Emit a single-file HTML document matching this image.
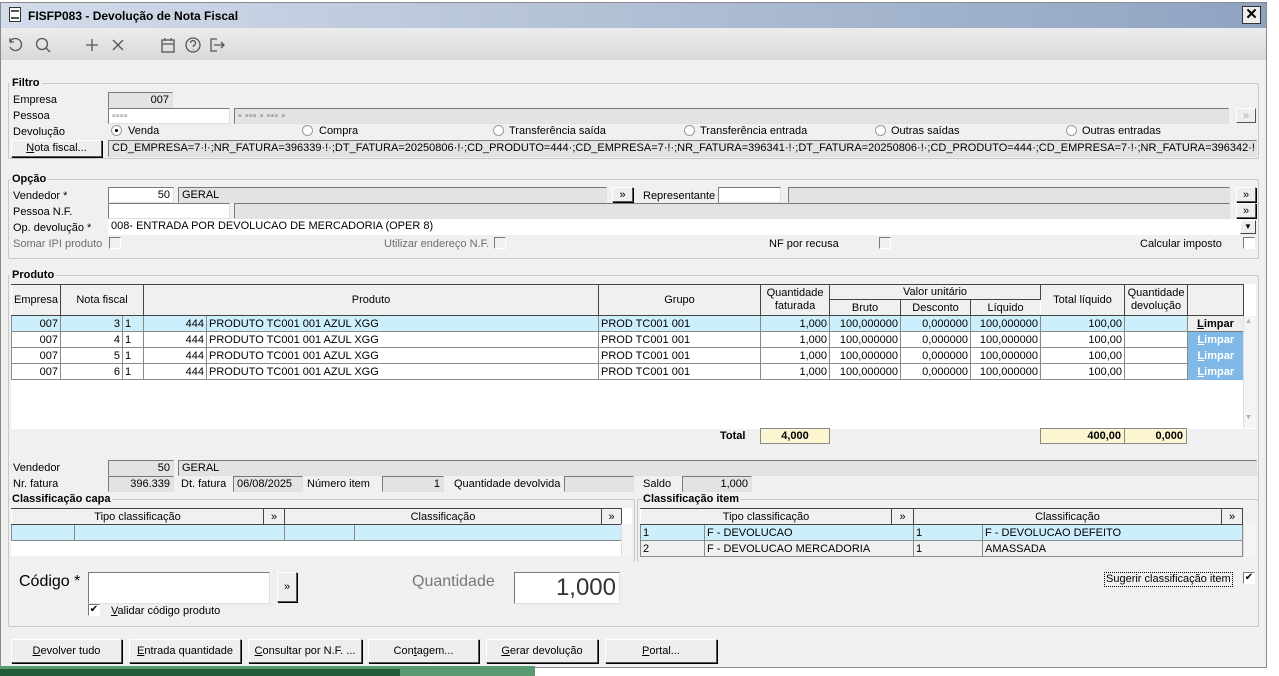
<!DOCTYPE html>
<html><head><meta charset="utf-8">
<style>
*{box-sizing:border-box;margin:0;padding:0}
body{width:1279px;height:676px;background:#fff;font-family:"Liberation Sans",Arial,sans-serif;font-size:11px;color:#000;position:relative;overflow:hidden}
.a{position:absolute;white-space:nowrap}
.win{position:absolute;left:0;top:2px;width:1267px;height:666px;background:#f0f0f0;border:1px solid #8a8a8a}
.title{position:absolute;left:1px;top:3px;width:1265px;height:25px;background:linear-gradient(90deg,#d3dcea,#8fa3c1);font-weight:bold;font-size:12px}
.tb{position:absolute;left:1px;top:28px;width:1265px;height:32px;background:linear-gradient(180deg,#ececec,#d9d9d9)}
.grp{position:absolute;border:1px solid #c8c8c8;border-radius:2px}
.gl{position:absolute;background:#f0f0f0;padding:0 2px;font-weight:bold;font-size:11px}
.in{position:absolute;height:16px;background:#fff;border:1px solid;border-color:#7a7a7a #e0e0e0 #e0e0e0 #7a7a7a;padding:1px 3px;line-height:13px;overflow:hidden;white-space:nowrap}
.ro{background:#e3e3e3}
.r{text-align:right}
.btn{position:absolute;background:#eee;border:1px solid;border-color:#fff #555 #555 #fff;box-shadow:1px 1px 0 #000;text-align:center;line-height:15px}
.rad{position:absolute;width:11px;height:11px;border-radius:50%;border:1px solid #9a9a9a;background:#fff}
.rad.on::after{content:"";position:absolute;left:3px;top:3px;width:3px;height:3px;border-radius:50%;background:#000}
.cb{position:absolute;width:12px;height:12px;border:1px solid;border-color:#7a7a7a #fff #fff #7a7a7a;background:#f0f0f0}
.cb.w{background:#fff}
.gray{color:#6d6d6d}
table{border-collapse:collapse;position:absolute}
td{border:1px solid #8a8a8a;height:16px;padding:0 2px;line-height:14px;white-space:nowrap;overflow:hidden}
.hd td{background:#f0f0f0;text-align:center;border-color:#444 #444 #444 #fff}
.sel td{background:#cdeefb}
.lim{color:#fff;background:#80b8e8!important;font-weight:bold;text-align:center;border:none!important}
.tot{background:#fcf6d0;border:1px solid #8a8a8a;font-weight:bold}
.u{text-decoration:underline}
.sb{position:absolute;background:#f4f4f4;border-left:1px solid #ddd}
</style></head><body>
<div class="win"></div>
<div class="title"><span class="a" style="left:8px;top:4px;width:12px;height:15px;background:#fff;border:1px solid #333"></span><span class="a" style="left:10px;top:7px;width:8px;height:9px;border-top:2px solid #555;border-bottom:2px solid #555"></span><span class="a" style="left:27px;top:6px">FISFP083 - Devolução de Nota Fiscal</span>
<span class="a" style="left:1241px;top:3px;width:19px;height:18px;background:#eee;border:1px solid #333;text-align:center;font-size:15px;line-height:16px">✕</span></div>
<div class="tb">
<svg class="a" style="left:6px;top:8px" width="230" height="18" fill="none" stroke="#555" stroke-width="1.3">
<path d="M3 6 A6 6 0 1 1 3 11 M3 2 V6 H7"/>
<circle cx="35" cy="8" r="5.5"/><path d="M39 12 L43 16"/>
<path d="M85 3 V15 M79 9 H91 M106 4 L116 14 M116 4 L106 14"/>
<rect x="155" y="4" width="12" height="12"/><path d="M155 8 H167 M158 2 V5 M164 2 V5"/>
<circle cx="186" cy="9" r="7"/><path d="M183.5 7 a2.5 2.5 0 1 1 3 2.5 v1.5 M186 13 v0.5"/>
<path d="M210 3 H204 V15 H210 M207 9 H217 M214 6 L217 9 L214 12"/>
</svg></div>

<!-- Filtro -->
<div class="grp" style="left:8px;top:83px;width:1251px;height:76px"></div>
<div class="gl" style="left:10px;top:77px">Filtro</div>
<div class="a" style="left:13px;top:94px">Empresa</div>
<div class="in ro r" style="left:108px;top:92px;width:65px">007</div>
<div class="a" style="left:13px;top:110px">Pessoa</div>
<div class="in" style="left:108px;top:108px;width:122px;color:#bbb">▪▪▪▪</div>
<div class="in ro" style="left:234px;top:108px;width:995px;color:#aaa">▪ ▪▪▪ ▪ ▪▪▪ ▪</div>
<div class="btn" style="left:1236px;top:108px;width:20px;height:15px;color:#aaa;box-shadow:none">»</div>
<div class="a" style="left:13px;top:126px">Devolução</div>
<div class="rad on" style="left:111px;top:125px"></div><div class="a" style="left:128px;top:125px">Venda</div>
<div class="rad" style="left:302px;top:125px"></div><div class="a" style="left:319px;top:125px">Compra</div>
<div class="rad" style="left:493px;top:125px"></div><div class="a" style="left:509px;top:125px">Transferência saída</div>
<div class="rad" style="left:684px;top:125px"></div><div class="a" style="left:700px;top:125px">Transferência entrada</div>
<div class="rad" style="left:875px;top:125px"></div><div class="a" style="left:891px;top:125px">Outras saídas</div>
<div class="rad" style="left:1066px;top:125px"></div><div class="a" style="left:1082px;top:125px">Outras entradas</div>
<div class="btn" style="left:11px;top:140px;width:91px;height:17px"><span class="u">N</span>ota fiscal...</div>
<div class="in ro" style="left:108px;top:140px;width:1149px;height:17px">CD_EMPRESA=7·!·;NR_FATURA=396339·!·;DT_FATURA=20250806·!·;CD_PRODUTO=444·;CD_EMPRESA=7·!·;NR_FATURA=396341·!·;DT_FATURA=20250806·!·;CD_PRODUTO=444·;CD_EMPRESA=7·!·;NR_FATURA=396342·!·;DT_FATURA=20250806</div>

<!-- Opção -->
<div class="grp" style="left:8px;top:179px;width:1251px;height:80px"></div>
<div class="gl" style="left:10px;top:173px">Opção</div>
<div class="a" style="left:13px;top:190px">Vendedor *</div>
<div class="in r" style="left:108px;top:187px;width:66px">50</div>
<div class="in ro" style="left:178px;top:187px;width:429px">GERAL</div>
<div class="btn" style="left:612px;top:187px;width:21px;height:15px">»</div>
<div class="a" style="left:643px;top:190px">Representante</div>
<div class="in" style="left:718px;top:187px;width:63px"></div>
<div class="in ro" style="left:788px;top:187px;width:442px"></div>
<div class="btn" style="left:1236px;top:187px;width:20px;height:15px">»</div>
<div class="a" style="left:13px;top:206px">Pessoa N.F.</div>
<div class="in" style="left:108px;top:203px;width:122px"></div>
<div class="in ro" style="left:234px;top:203px;width:996px"></div>
<div class="btn" style="left:1236px;top:203px;width:20px;height:15px">»</div>
<div class="a" style="left:13px;top:222px">Op. devolução *</div>
<div class="in" style="left:108px;top:219px;width:1132px;border:none">008- ENTRADA POR DEVOLUCAO DE MERCADORIA (OPER 8)</div>
<div class="btn" style="left:1240px;top:220px;width:16px;height:14px;font-size:8px;line-height:12px;box-shadow:none;border-color:#fff #444 #444 #fff">▼</div>
<div class="a gray" style="left:13px;top:238px">Somar IPI produto</div><div class="cb" style="left:109px;top:237px"></div>
<div class="a gray" style="left:384px;top:238px">Utilizar endereço N.F.</div><div class="cb" style="left:494px;top:237px"></div>
<div class="a" style="left:769px;top:238px">NF por recusa</div><div class="cb" style="left:879px;top:237px"></div>
<div class="a" style="left:1140px;top:238px">Calcular imposto</div><div class="cb w" style="left:1243px;top:237px"></div>

<!-- Produto -->
<div class="grp" style="left:8px;top:275px;width:1251px;height:352px"></div>
<div class="gl" style="left:10px;top:269px">Produto</div>
<div class="a" style="left:11px;top:284px;width:1245px;height:145px;background:#fff"></div>
<table style="left:11px;top:284px;width:1232px;table-layout:fixed">
<colgroup><col style="width:49px"><col style="width:62px"><col style="width:21px"><col style="width:63px"><col style="width:392px"><col style="width:162px"><col style="width:69px"><col style="width:71px"><col style="width:70px"><col style="width:70px"><col style="width:84px"><col style="width:63px"><col style="width:56px"></colgroup>
<tr class="hd"><td rowspan="2" style="height:31px">Empresa</td><td colspan="2" rowspan="2">Nota fiscal</td><td colspan="2" rowspan="2">Produto</td><td rowspan="2">Grupo</td><td rowspan="2" style="line-height:13px">Quantidade<br>faturada</td><td colspan="3" style="height:15px">Valor unitário</td><td rowspan="2">Total líquido</td><td rowspan="2" style="line-height:13px">Quantidade<br>devolução</td><td rowspan="2"></td></tr>
<tr class="hd"><td style="height:16px">Bruto</td><td>Desconto</td><td>Líquido</td></tr>
<tr class="sel"><td class="r">007</td><td class="r">3</td><td>1</td><td class="r">444</td><td>PRODUTO TC001 001 AZUL XGG</td><td>PROD TC001 001</td><td class="r">1,000</td><td class="r">100,000000</td><td class="r">0,000000</td><td class="r">100,000000</td><td class="r">100,00</td><td></td><td style="background:#eee;font-weight:bold;text-align:center;border:1px solid #777"><span class="u">L</span>impar</td></tr>
<tr><td class="r">007</td><td class="r">4</td><td>1</td><td class="r">444</td><td>PRODUTO TC001 001 AZUL XGG</td><td>PROD TC001 001</td><td class="r">1,000</td><td class="r">100,000000</td><td class="r">0,000000</td><td class="r">100,000000</td><td class="r">100,00</td><td></td><td class="lim"><span class="u">L</span>impar</td></tr>
<tr><td class="r">007</td><td class="r">5</td><td>1</td><td class="r">444</td><td>PRODUTO TC001 001 AZUL XGG</td><td>PROD TC001 001</td><td class="r">1,000</td><td class="r">100,000000</td><td class="r">0,000000</td><td class="r">100,000000</td><td class="r">100,00</td><td></td><td class="lim"><span class="u">L</span>impar</td></tr>
<tr><td class="r">007</td><td class="r">6</td><td>1</td><td class="r">444</td><td>PRODUTO TC001 001 AZUL XGG</td><td>PROD TC001 001</td><td class="r">1,000</td><td class="r">100,000000</td><td class="r">0,000000</td><td class="r">100,000000</td><td class="r">100,00</td><td></td><td class="lim"><span class="u">L</span>impar</td></tr>
</table>
<div class="sb" style="left:1243px;top:316px;width:13px;height:112px"></div>
<div class="a" style="left:1245px;top:318px;font-size:7px;color:#aaa">▲</div>
<div class="a" style="left:1245px;top:414px;font-size:7px;color:#aaa">▼</div>
<div class="a" style="left:11px;top:429px;width:1245px;height:16px;background:#f0f0f0"></div>
<div class="a" style="left:720px;top:430px;font-weight:bold">Total</div>
<div class="a tot r" style="left:760px;top:428px;width:70px;height:16px;padding:1px 3px;text-align:center">4,000</div>
<div class="a tot r" style="left:1040px;top:428px;width:85px;height:16px;padding:1px 3px">400,00</div>
<div class="a tot r" style="left:1124px;top:428px;width:63px;height:16px;padding:1px 3px">0,000</div>

<div class="a" style="left:13px;top:462px">Vendedor</div>
<div class="in ro r" style="left:108px;top:460px;width:66px">50</div>
<div class="in ro" style="left:178px;top:460px;width:1079px">GERAL</div>
<div class="a" style="left:13px;top:478px">Nr. fatura</div>
<div class="in ro r" style="left:108px;top:476px;width:66px">396.339</div>
<div class="a" style="left:181px;top:478px">Dt. fatura</div>
<div class="in ro" style="left:233px;top:476px;width:70px">06/08/2025</div>
<div class="a" style="left:307px;top:478px">Número item</div>
<div class="in ro r" style="left:382px;top:476px;width:62px">1</div>
<div class="a" style="left:454px;top:478px">Quantidade devolvida</div>
<div class="in ro" style="left:564px;top:476px;width:70px"></div>
<div class="a" style="left:643px;top:478px">Saldo</div>
<div class="in ro r" style="left:682px;top:476px;width:70px">1,000</div>

<div class="grp" style="left:8px;top:499px;width:627px;height:63px;border-bottom:none"></div>
<div class="gl" style="left:10px;top:493px">Classificação capa</div>
<div class="a" style="left:11px;top:508px;width:621px;height:48px;background:#fff"></div>
<table style="left:11px;top:508px;width:610px;table-layout:fixed">
<colgroup><col style="width:63px"><col style="width:189px"><col style="width:21px"><col style="width:70px"><col style="width:247px"><col style="width:20px"></colgroup>
<tr class="hd"><td colspan="2" style="height:15px">Tipo classificação</td><td>»</td><td colspan="2">Classificação</td><td>»</td></tr>
<tr class="sel"><td></td><td colspan="2"></td><td></td><td colspan="2"></td></tr>
</table>
<div class="sb" style="left:621px;top:524px;width:11px;height:32px"></div>

<div class="grp" style="left:637px;top:499px;width:622px;height:63px;border-bottom:none"></div>
<div class="gl" style="left:641px;top:493px">Classificação item</div>
<table style="left:640px;top:508px;width:602px;table-layout:fixed">
<colgroup><col style="width:64px"><col style="width:187px"><col style="width:22px"><col style="width:69px"><col style="width:239px"><col style="width:21px"></colgroup>
<tr class="hd"><td colspan="2" style="height:15px">Tipo classificação</td><td>»</td><td colspan="2">Classificação</td><td>»</td></tr>
<tr class="sel"><td>1</td><td colspan="2">F - DEVOLUCAO</td><td>1</td><td colspan="2">F - DEVOLUCAO DEFEITO</td></tr>
<tr><td>2</td><td colspan="2">F - DEVOLUCAO MERCADORIA</td><td>1</td><td colspan="2">AMASSADA</td></tr>
</table>
<div class="sb" style="left:1243px;top:524px;width:13px;height:32px"></div>

<div class="a" style="left:19px;top:573px;font-size:16px">Código *</div>
<div class="in" style="left:88px;top:572px;width:182px;height:32px"></div>
<div class="btn" style="left:277px;top:572px;width:20px;height:30px;line-height:28px">»</div>
<div class="cb w" style="left:88px;top:604px;font-size:10px;line-height:10px;text-align:center">✔</div>
<div class="a" style="left:111px;top:605px"><span class="u">V</span>alidar código produto</div>
<div class="a" style="left:412px;top:573px;font-size:16px;color:#777">Quantidade</div>
<div class="in r" style="left:514px;top:572px;width:106px;height:32px;font-size:24px;line-height:27px;color:#333">1,000</div>
<div class="a" style="left:1104px;top:572px;border:1px dotted #000;padding:0 1px;line-height:13px">Sugerir classificação item</div>
<div class="cb w" style="left:1243px;top:572px;font-size:10px;line-height:10px;text-align:center">✔</div>

<div class="btn" style="left:11px;top:639px;width:111px;height:24px;line-height:22px"><span class="u">D</span>evolver tudo</div>
<div class="btn" style="left:129px;top:639px;width:112px;height:24px;line-height:22px"><span class="u">E</span>ntrada quantidade</div>
<div class="btn" style="left:248px;top:639px;width:114px;height:24px;line-height:22px"><span class="u">C</span>onsultar por N.F. ...</div>
<div class="btn" style="left:368px;top:639px;width:111px;height:24px;line-height:22px">Con<span class="u">t</span>agem...</div>
<div class="btn" style="left:486px;top:639px;width:112px;height:24px;line-height:22px"><span class="u">G</span>erar devolução</div>
<div class="btn" style="left:605px;top:639px;width:112px;height:24px;line-height:22px"><span class="u">P</span>ortal...</div>

<div class="a" style="left:0;top:666px;width:535px;height:10px;background:#5a9a70"></div>
<div class="a" style="left:0;top:669px;width:400px;height:7px;background:#1f5a3a"></div>
</body></html>
